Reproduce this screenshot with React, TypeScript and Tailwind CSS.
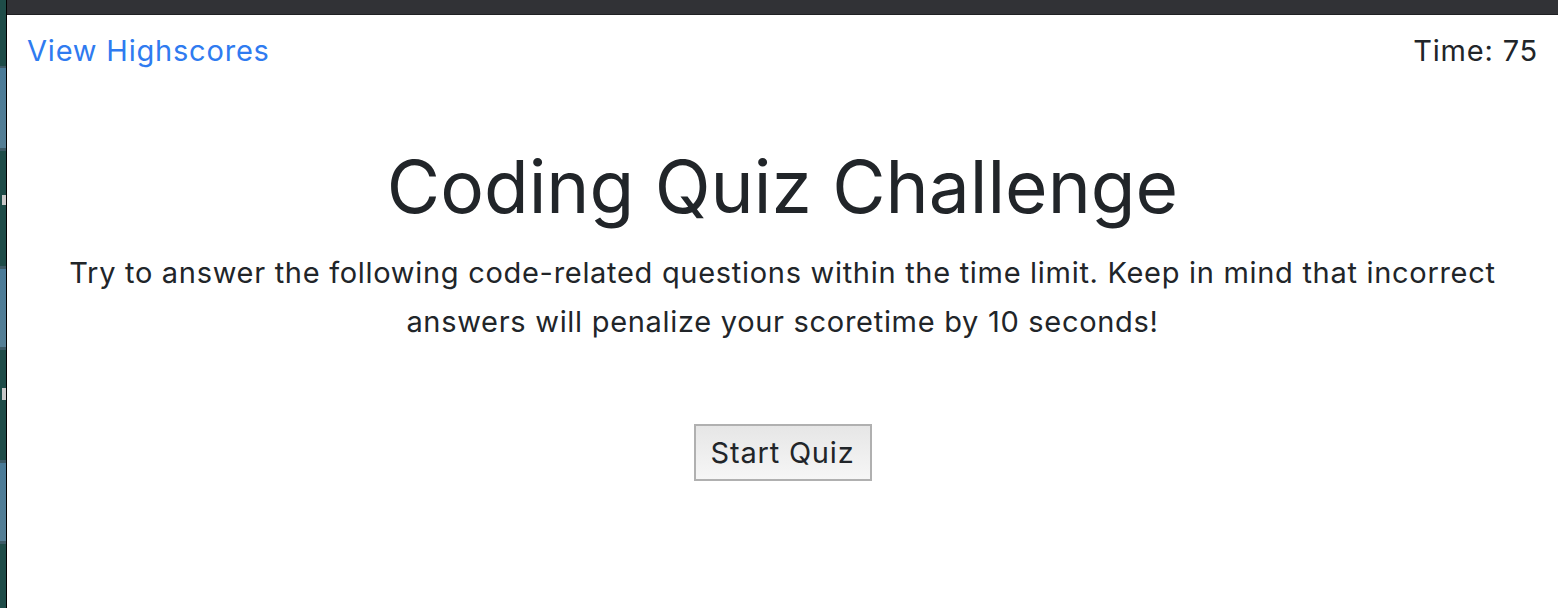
import React from "react";

const SideStrip = () => {
  return (
    <div className="flex h-full w-[6px] flex-col">
      <div className="h-[66px] bg-[#1e4c48]" />
      <div className="h-[2px] bg-[#3c5a66]" />
      <div className="h-[80px] bg-gradient-to-b from-[#4a7b98] to-[#557f95]" />
      <div className="h-[3px] bg-[#3c5a66]" />
      <div className="relative h-[115px] bg-[#1e4c48]">
        <div className="absolute left-[2px] top-[44px] h-[10px] w-[4px] bg-[#c8c8c8]" />
      </div>
      <div className="h-[3px] bg-[#3c5a66]" />
      <div className="h-[78px] bg-gradient-to-b from-[#4a7b98] to-[#557f95]" />
      <div className="h-[3px] bg-[#3c5a66]" />
      <div className="relative h-[110px] bg-[#1e4c48]">
        <div className="absolute left-[2px] top-[38px] h-[12px] w-[4px] bg-[#c8c8c8]" />
      </div>
      <div className="h-[3px] bg-[#3c5a66]" />
      <div className="h-[78px] bg-gradient-to-b from-[#4a7b98] to-[#557f95]" />
      <div className="h-[3px] bg-[#3c5a66]" />
      <div className="flex-1 bg-[#1e4c48]" />
    </div>
  );
};

export default function App() {
  return (
    <div
      className="flex h-[608px] w-[1558px] overflow-hidden bg-white text-[#212529]"
      style={{ fontFamily: "Inter, 'Noto Sans', sans-serif" }}
    >
      <SideStrip />
      <div className="w-px bg-black" />
      <div className="flex flex-1 flex-col">
        <div className="h-[14px] bg-[#313236]" />
        <div className="h-px bg-[#1f2023]" />

        <header className="flex items-center justify-between px-5 pt-[16px] text-[29px] leading-[40px] tracking-[0.8px]">
          <a href="#" className="text-[#2f7bf0]">
            View Highscores
          </a>
          <span>Time: 75</span>
        </header>

        <main className="flex flex-col items-center pt-[76px]">
          <h1 className="text-[73px] leading-[80px] font-normal">
            Coding Quiz Challenge
          </h1>
          <p className="mt-[21px] max-w-[1480px] text-center text-[29px] leading-[49px] tracking-[0.7px]">
            Try to answer the following code-related questions within the time limit. Keep in
            mind that incorrect answers will penalize your scoretime by 10 seconds!
          </p>
          <button className="mt-[78px] h-[57px] w-[178px] border-2 border-[#b0b0b0] bg-gradient-to-b from-[#e6e6e6] to-[#f6f6f6] text-[29px] tracking-[0.8px]">
            Start Quiz
          </button>
        </main>
      </div>
    </div>
  );
}
